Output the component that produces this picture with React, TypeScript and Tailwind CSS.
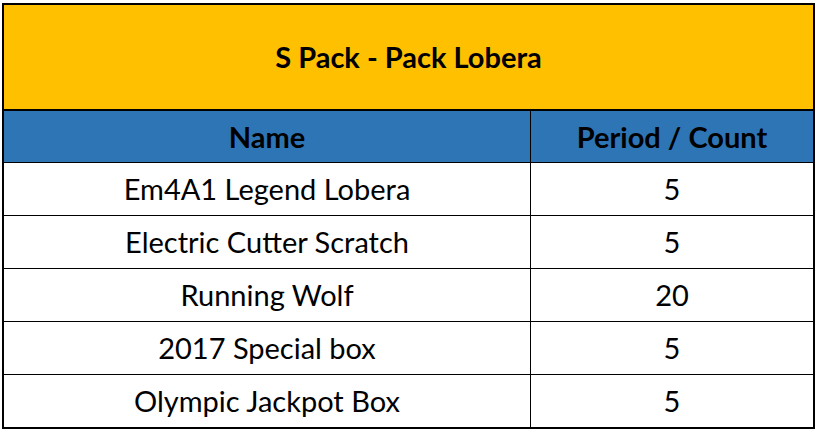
const rows = [
  { name: "Em4A1 Legend Lobera", count: "5" },
  { name: "Electric Cutter Scratch", count: "5" },
  { name: "Running Wolf", count: "20" },
  { name: "2017 Special box", count: "5" },
  { name: "Olympic Jackpot Box", count: "5" },
]

export default function App() {
  return (
    <div
      className="w-[818px] h-[432px] bg-white pt-[3px] pl-[2px] text-black"
      style={{ fontFamily: 'Lato, "Open Sans", sans-serif' }}
    >
      <div className="w-[813px] border-2 border-black">
        {/* Pack title */}
        <div className="h-[106px] bg-[#ffc000] border-b-2 border-black flex items-center justify-center text-[29px] font-bold">
          S Pack - Pack Lobera
        </div>

        {/* Column headers */}
        <div className="flex h-[52px] bg-[#2e75b6] border-b border-black text-[29px] font-bold">
          <div className="w-[527px] border-r border-black flex items-center justify-center">Name</div>
          <div className="flex-1 flex items-center justify-center">Period / Count</div>
        </div>

        {/* Items */}
        {rows.map((row, i) => (
          <div
            key={i}
            className={`flex text-[29px] ${i < rows.length - 1 ? "h-[53px] border-b border-black" : "h-[52px]"}`}
          >
            <div className="w-[527px] border-r border-black flex items-center justify-center">{row.name}</div>
            <div className="flex-1 flex items-center justify-center">{row.count}</div>
          </div>
        ))}
      </div>
    </div>
  )
}
